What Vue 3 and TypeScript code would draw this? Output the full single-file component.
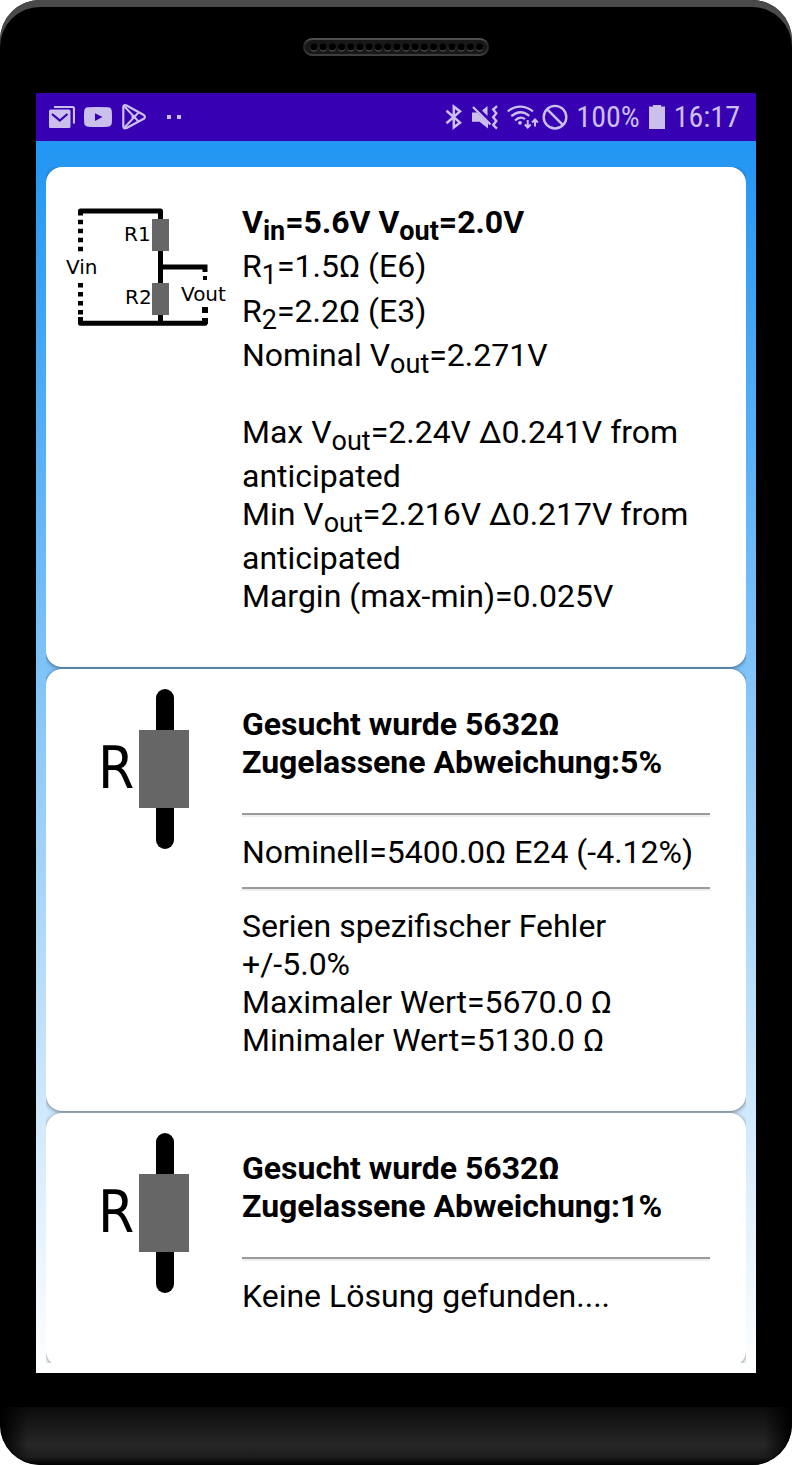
<script setup lang="ts">
interface Run {
  text: string
  sub?: boolean
}

interface Block {
  kind: 'heading' | 'text' | 'rule'
  tight?: boolean
  lines?: Run[][]
}

interface Result {
  id: string
  figure: 'divider' | 'resistor'
  blocks: Block[]
}

const holes: number[] = Array.from({ length: 19 }, (_, i) => 11 + i * 9.2)

const results: Result[] = [
  {
    id: 'divider',
    figure: 'divider',
    blocks: [
      {
        kind: 'heading',
        tight: true,
        lines: [
          [
            { text: 'V' },
            { text: 'in', sub: true },
            { text: '=5.6V V' },
            { text: 'out', sub: true },
            { text: '=2.0V' },
          ],
        ],
      },
      {
        kind: 'text',
        lines: [
          [{ text: 'R' }, { text: '1', sub: true }, { text: '=1.5Ω (E6)' }],
          [{ text: 'R' }, { text: '2', sub: true }, { text: '=2.2Ω (E3)' }],
          [{ text: 'Nominal V' }, { text: 'out', sub: true }, { text: '=2.271V' }],
        ],
      },
      {
        kind: 'text',
        lines: [
          [{ text: 'Max V' }, { text: 'out', sub: true }, { text: '=2.24V Δ0.241V from anticipated' }],
          [{ text: 'Min V' }, { text: 'out', sub: true }, { text: '=2.216V Δ0.217V from anticipated' }],
          [{ text: 'Margin (max-min)=0.025V' }],
        ],
      },
    ],
  },
  {
    id: 'tolerance-5',
    figure: 'resistor',
    blocks: [
      {
        kind: 'heading',
        lines: [[{ text: 'Gesucht wurde 5632Ω' }], [{ text: 'Zugelassene Abweichung:5%' }]],
      },
      { kind: 'rule' },
      { kind: 'text', tight: true, lines: [[{ text: 'Nominell=5400.0Ω E24 (-4.12%)' }]] },
      { kind: 'rule' },
      {
        kind: 'text',
        lines: [
          [{ text: 'Serien spezifischer Fehler +/-5.0%' }],
          [{ text: 'Maximaler Wert=5670.0 Ω' }],
          [{ text: 'Minimaler Wert=5130.0 Ω' }],
        ],
      },
    ],
  },
  {
    id: 'tolerance-1',
    figure: 'resistor',
    blocks: [
      {
        kind: 'heading',
        lines: [[{ text: 'Gesucht wurde 5632Ω' }], [{ text: 'Zugelassene Abweichung:1%' }]],
      },
      { kind: 'rule' },
      { kind: 'text', lines: [[{ text: 'Keine Lösung gefunden....' }]] },
    ],
  },
]
</script>

<template>
  <div class="phone">
    <div class="top-bezel">
      <svg class="speaker" width="186" height="18" viewBox="0 0 186 18" aria-hidden="true">
        <defs>
          <linearGradient id="pill-edge" x1="0" y1="0" x2="0" y2="1">
            <stop offset="0" stop-color="#505050" />
            <stop offset="0.4" stop-color="#222222" />
            <stop offset="1" stop-color="#3e3e3e" />
          </linearGradient>
        </defs>
        <rect x="1" y="1" width="184" height="16" rx="8" fill="#181818" stroke="url(#pill-edge)" stroke-width="2" />
        <g v-for="cx in holes" :key="cx">
          <circle :cx="cx" cy="9.8" r="3.6" fill="#606060" />
          <circle :cx="cx" cy="9" r="3.6" fill="#000000" />
        </g>
      </svg>
    </div>

    <div class="screen">
      <header class="status">
        <div class="notifications">
          <svg width="26" height="48" viewBox="0 0 26 48" aria-hidden="true">
            <path d="M5 14H23.5Q25 14 25 15.5V30.5" fill="none" stroke="currentColor" stroke-width="2.2" />
            <rect x="0" y="16.5" width="21.5" height="18.5" rx="1.5" fill="currentColor" />
            <path d="M3 21L10.8 27.5L18.5 21" fill="none" stroke="#3700b3" stroke-width="2.2" />
          </svg>
          <svg width="28" height="48" viewBox="0 0 28 48" aria-hidden="true">
            <path d="M4 14.3Q14 13.6 24 14.3Q27.5 14.6 27.8 18Q28.2 24 27.8 30Q27.5 33.4 24 33.7Q14 34.4 4 33.7Q.5 33.4 .2 30Q-.2 24 .2 18Q.5 14.6 4 14.3Z" fill="currentColor" />
            <path d="M11 20.3L18.5 24L11 28Z" fill="#3700b3" />
          </svg>
          <svg class="store" width="25" height="48" viewBox="0 0 25 48" aria-hidden="true">
            <g fill="none" stroke="currentColor" stroke-width="2.2" stroke-linejoin="round">
              <path d="M2.3 14V33.5Q2.6 36.2 5.6 35L22.8 25.8Q25 23.9 22.8 22L5.6 12.5Q2.6 11.4 2.3 14Z" />
              <path d="M3 13L18 29M3 35L18 19" stroke-width="2" />
            </g>
            <circle cx="12.6" cy="23.9" r="2.200" fill="currentColor" />
          </svg>
          <svg class="more" width="14" height="48" viewBox="0 0 14 48" aria-hidden="true">
            <path d="M0 22H4V26H0ZM10 22H14V26H10Z" fill="currentColor" />
          </svg>
        </div>

        <div class="system">
          <svg width="17" height="48" viewBox="0 0 17 48" aria-hidden="true">
            <path d="M1.5 17.8L15 29.6L8.8 34.5V13.5L15 18.4L1.5 30.2" fill="none" stroke="currentColor" stroke-width="2.5" />
          </svg>
          <svg class="mute" width="27" height="48" viewBox="0 0 27 48" aria-hidden="true">
            <path d="M1 19.5H6L17 30V35.5L8.5 28.8H1Z" fill="currentColor" />
            <path d="M11 17.5L16.5 13V23Z" fill="currentColor" />
            <path d="M2 14L19.5 31.5" stroke="currentColor" stroke-width="2.3" />
            <path d="M26 13.2L22.2 16.5L25.3 20.3L22.2 24.3L25.3 28L22.2 32L26 35.6" fill="none" stroke="currentColor" stroke-width="2.4" />
          </svg>
          <svg class="wifi" width="32" height="48" viewBox="0 0 32 48" aria-hidden="true">
            <g fill="none" stroke="currentColor" stroke-width="2.2">
              <path d="M.7 18.3Q13.3 9 26 18.3" />
              <path d="M4.3 23.2Q13.3 15.5 22.3 22.8" />
              <path d="M8 27.5Q13.3 22.5 18 26.2" />
              <path d="M20.7 27V34.5M17.8 31.5L20.7 34.5L23.6 31.5" stroke-width="2" />
              <path d="M28 33.5V26.5M25.1 29.500L28 26.5L30.9 29.500" stroke-width="2" />
            </g>
            <circle cx="13" cy="29.8" r="1.9" fill="currentColor" />
          </svg>
          <svg class="blocked" width="26" height="48" viewBox="0 0 26 48" aria-hidden="true">
            <g fill="none" stroke="currentColor" stroke-width="2.4">
              <circle cx="13" cy="24.2" r="11.3" />
              <path d="M5 16.2L21 32.2" />
            </g>
          </svg>
          <span class="level">100%</span>
          <svg class="battery" width="16" height="48" viewBox="0 0 16 48" aria-hidden="true">
            <path d="M4 12H12V13.5H16V36H0V13.5H4Z" fill="currentColor" />
          </svg>
          <time class="clock">16:17</time>
        </div>
      </header>

      <main class="content">
        <div class="list">
          <article v-for="result in results" :key="result.id" class="card">
            <svg v-if="result.figure === 'divider'" class="figure" width="160" height="160" viewBox="0 0 160 160" role="img" aria-label="Spannungsteiler">
              <g fill="none" stroke="#000000" stroke-width="5">
                <path d="M14.5 28.5V24H94.5V136" stroke-linejoin="round" />
                <path d="M94.5 80H139V85" />
                <path d="M14.5 130V136.3H139V131" stroke-linejoin="round" />
                <path d="M14.5 32.7V65" stroke-dasharray="4.5 4.5" />
                <path d="M14.5 96V130" stroke-dasharray="4.5 4.5" />
                <path d="M139 89V93" stroke-width="4" />
                <path d="M139 120V126M139 131V137" stroke-width="6" />
              </g>
              <rect x="86" y="32" width="17" height="32" fill="#666666" />
              <rect x="86" y="96" width="17" height="32" fill="#666666" />
              <g class="label">
                <text x="58" y="54">R1</text>
                <text x="59" y="117">R2</text>
                <text x="0" y="87">Vin</text>
                <text x="115" y="114">Vout</text>
              </g>
            </svg>
            <svg v-else class="figure" width="160" height="160" viewBox="0 0 160 160" role="img" aria-label="Widerstand">
              <path d="M99 9V151" stroke="#000000" stroke-width="18" stroke-linecap="round" />
              <rect x="73" y="41" width="50" height="78" fill="#666666" />
              <text class="symbol" x="32" y="99">R</text>
            </svg>

            <div class="details">
              <template v-for="(block, b) in result.blocks" :key="b">
                <hr v-if="block.kind === 'rule'" class="rule" />
                <component
                  :is="block.kind === 'heading' ? 'h2' : 'p'"
                  v-else
                  :class="['block', block.kind, { tight: block.tight }]"
                >
                  <span v-for="(line, l) in block.lines" :key="l" class="line"
                    ><template v-for="(run, r) in line" :key="r"
                      ><sub v-if="run.sub">{{ run.text }}</sub
                      ><template v-else>{{ run.text }}</template></template
                    ></span
                  >
                </component>
              </template>
            </div>
          </article>
        </div>
      </main>
    </div>

    <div class="bottom-bezel"></div>
    <div class="chin"></div>
  </div>
</template>

<style>
body {
  margin: 0;
  background: #ffffff;
}
</style>

<style scoped>
.phone {
  display: flex;
  flex-direction: column;
  height: 100vh;
  overflow: hidden;
  border-radius: 40px;
  background: #000000;
  box-shadow: inset 0 7px 0 #4a4a4a;
  font-family: Roboto, "Liberation Sans", sans-serif;
  color: #000000;
}

.top-bezel {
  display: flex;
  flex: none;
  justify-content: center;
  align-items: center;
  height: 93px;
}

.screen {
  display: flex;
  flex: 1;
  flex-direction: column;
  min-height: 0;
  margin: 0 36px;
}

.status {
  display: flex;
  flex: none;
  justify-content: space-between;
  height: 48px;
  padding: 0 16px 0 13px;
  background: #3700b3;
  color: #cbbfec;
}

.notifications,
.system {
  display: flex;
  align-items: center;
}

.notifications {
  gap: 9px;
}

.more {
  margin-left: 12px;
}

.system {
  gap: 9px;
}

.wifi {
  margin-right: -6px;
}

.blocked {
  margin-right: -1px;
}

.level,
.clock {
  font-family: "Roboto Condensed", Roboto, sans-serif;
  font-size: 30px;
  line-height: 48px;
}

.content {
  display: flex;
  flex: 1;
  min-height: 0;
  padding: 26px 10px 10px;
  background: linear-gradient(#2196f3, #ffffff);
}

.list {
  display: flex;
  flex: 1;
  flex-direction: column;
  gap: 2px;
  overflow: hidden;
}

.card {
  display: flex;
  flex: none;
  gap: 16px;
  padding: 20px 36px 20px 20px;
  border-radius: 16px;
  background: #ffffff;
  box-shadow: 0 1px 4px rgba(0, 0, 0, 0.5);
}

.figure {
  flex: none;
  overflow: visible;
}

.label {
  font-family: "DejaVu Sans", sans-serif;
  font-size: 20px;
}

.symbol {
  font-family: "DejaVu Sans Condensed", "DejaVu Sans", sans-serif;
  font-size: 58px;
}

.details {
  flex: 1;
  min-width: 0;
  padding-top: 16px;
  font-size: 32px;
  line-height: 38px;
}

.block {
  margin: 0 0 32px;
  font-size: 32px;
  font-weight: 400;
}

.heading {
  font-weight: 700;
}

.tight {
  margin-bottom: 0;
}

.rule + .tight {
  margin-bottom: 16px;
}

.line {
  display: block;
}

sub {
  font-size: 27px;
  line-height: 32px;
}

.rule {
  height: 0;
  margin: 0 0 16px;
  border: 2px solid;
  border-width: 2px 0;
  border-color: #9a9a9a #eeeeee #eeeeee #9a9a9a;
}

.bottom-bezel {
  flex: none;
  height: 34px;
}

.chin {
  flex: none;
  height: 58px;
  border-radius: 0 0 40px 40px;
  background:
    linear-gradient(90deg, #000000, transparent 28px, transparent calc(100% - 28px), #000000),
    linear-gradient(#0c0c0c, #262626 65%, #1e1e1e 85%, #000000);
}
</style>
